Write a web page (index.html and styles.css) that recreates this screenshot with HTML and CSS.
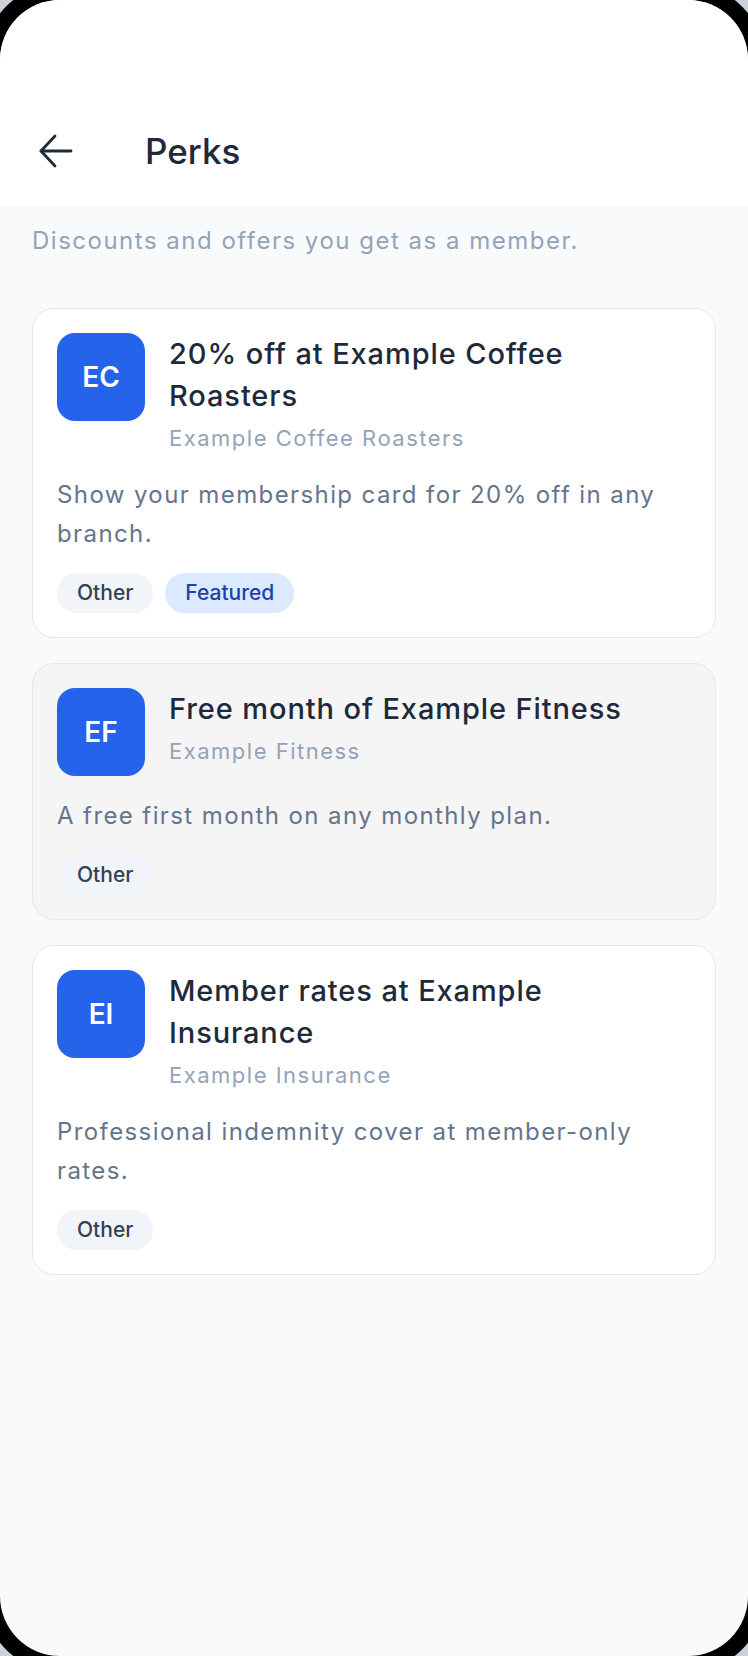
FILE: index.html
```html
<!DOCTYPE html>
<html lang="en">
<head>
    <meta charset="UTF-8">
    <meta name="viewport" content="width=device-width, initial-scale=1.0">
    <title>Perks</title>
    <link rel="stylesheet" href="styles.css">
</head>
<body>
    <div class="screen">
        <header class="topbar">
            <button class="back" aria-label="Back">
                <svg width="34" height="34" viewBox="0 0 34 34" fill="none" stroke="currentColor" stroke-width="2.8" stroke-linecap="round" stroke-linejoin="round">
                    <path d="M32 17H2"/>
                    <path d="M16 2L2 17l14 15"/>
                </svg>
            </button>
            <h1>Perks</h1>
        </header>

        <main class="content">
            <p class="intro">Discounts and offers you get as a member.</p>

            <div class="perk-list">
                <article class="perk">
                    <div class="perk-head">
                        <div class="logo">EC</div>
                        <div class="perk-text">
                            <h2>20% off at Example Coffee Roasters</h2>
                            <p class="partner">Example Coffee Roasters</p>
                        </div>
                    </div>
                    <p class="desc">Show your membership card for 20% off in any branch.</p>
                    <ul class="tags">
                        <li>Other</li>
                        <li class="featured">Featured</li>
                    </ul>
                </article>

                <article class="perk pressed">
                    <div class="perk-head">
                        <div class="logo">EF</div>
                        <div class="perk-text">
                            <h2>Free month of Example Fitness</h2>
                            <p class="partner">Example Fitness</p>
                        </div>
                    </div>
                    <p class="desc">A free first month on any monthly plan.</p>
                    <ul class="tags">
                        <li>Other</li>
                    </ul>
                </article>

                <article class="perk">
                    <div class="perk-head">
                        <div class="logo">EI</div>
                        <div class="perk-text">
                            <h2>Member rates at Example Insurance</h2>
                            <p class="partner">Example Insurance</p>
                        </div>
                    </div>
                    <p class="desc">Professional indemnity cover at member-only rates.</p>
                    <ul class="tags">
                        <li>Other</li>
                    </ul>
                </article>
            </div>
        </main>
    </div>
</body>
</html>
```

FILE: styles.css
```css
:root{
    --ink : #1e293b;
    --muted : #94a3b8;
    --body-text : #64748b;
    --line : #e2e8f0;
    --page : #f8fafc;
    --blue : #2563eb;
}

*{
    padding: 0;
    margin: 0;
    box-sizing: border-box;
}

ul{
    list-style: none;
}

html, body{
    height: 100%;
}

body{
    background: #cdd2da;
    font-family: Inter, "Noto Sans", sans-serif;
    overflow: hidden;
}

.screen{
    height: 1656px;
    background: var(--page);
    border-radius: 60px;
    box-shadow: 0 0 0 16px #000;
    overflow: hidden;
}

.topbar{
    height: 206px;
    background: #fff;
    display: flex;
    align-items: center;
    padding: 96px 32px 0;
}

.back{
    width: 48px;
    height: 48px;
    display: flex;
    align-items: center;
    justify-content: center;
    background: none;
    border: none;
    color: var(--ink);
}

.topbar h1{
    margin-left: 65px;
    font-size: 35px;
    font-weight: 500;
    color: var(--ink);
}

.content{
    padding: 17px 32px 0;
}

.intro{
    font-size: 24px;
    line-height: 36px;
    letter-spacing: 1.5px;
    color: var(--muted);
    margin-bottom: 49px;
}

.perk-list{
    display: flex;
    flex-direction: column;
    gap: 25px;
}

.perk{
    background: #fff;
    border: 1.5px solid var(--line);
    border-radius: 22px;
    padding: 24px;
}

.perk.pressed{
    background: #f5f5f5;
}

.perk-head{
    display: flex;
    gap: 24px;
    align-items: flex-start;
}

.logo{
    flex: 0 0 88px;
    height: 88px;
    border-radius: 18px;
    background: var(--blue);
    color: #fff;
    font-size: 28px;
    font-weight: 600;
    display: flex;
    align-items: center;
    justify-content: center;
}

.perk-text h2{
    font-size: 29px;
    line-height: 42px;
    font-weight: 500;
    letter-spacing: 0.9px;
    color: var(--ink);
}

.partner{
    margin-top: 5px;
    font-size: 22px;
    line-height: 33px;
    letter-spacing: 1.5px;
    color: var(--muted);
}

.desc{
    margin-top: 20px;
    font-size: 24px;
    line-height: 39px;
    letter-spacing: 1.4px;
    color: var(--body-text);
}

.tags{
    display: flex;
    gap: 12px;
    margin-top: 20px;
}

.tags li{
    padding: 6px 20px;
    line-height: 28px;
    font-size: 21px;
    font-weight: 500;
    color: #334155;
    background: #f1f5f9;
    border-radius: 999px;
}

.tags li.featured{
    color: #1e40af;
    background: #dbeafe;
}
```
